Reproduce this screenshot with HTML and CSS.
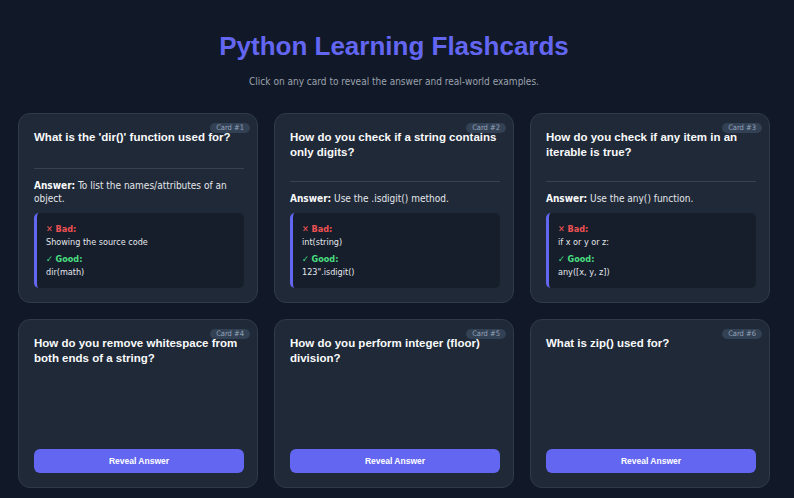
FILE: index.html
```html
<!DOCTYPE html>
<html lang="en">
<head>
<meta charset="utf-8">
<title>Python Learning Flashcards</title>
<link rel="stylesheet" href="styles.css">
</head>
<body>
<header class="header">
  <h1 class="title">Python Learning Flashcards</h1>
  <p class="subtitle">Click on any card to reveal the answer and real-world examples.</p>
</header>
<main class="grid">
  <section class="card">
    <span class="badge">Card #1</span>
    <h2 class="question">What is the 'dir()' function used for?</h2>
    <div class="answer">
      <p class="answer-text"><strong>Answer:</strong> To list the names/attributes of an object.</p>
      <div class="example">
        <div class="label bad">✕ Bad:</div>
        <div class="code">Showing the source code</div>
        <div class="label good">✓ Good:</div>
        <div class="code">dir(math)</div>
      </div>
    </div>
  </section>
  <section class="card">
    <span class="badge">Card #2</span>
    <h2 class="question">How do you check if a string contains only digits?</h2>
    <div class="answer">
      <p class="answer-text"><strong>Answer:</strong> Use the .isdigit() method.</p>
      <div class="example">
        <div class="label bad">✕ Bad:</div>
        <div class="code">int(string)</div>
        <div class="label good">✓ Good:</div>
        <div class="code">123".isdigit()</div>
      </div>
    </div>
  </section>
  <section class="card">
    <span class="badge">Card #3</span>
    <h2 class="question">How do you check if any item in an iterable is true?</h2>
    <div class="answer">
      <p class="answer-text"><strong>Answer:</strong> Use the any() function.</p>
      <div class="example">
        <div class="label bad">✕ Bad:</div>
        <div class="code">if x or y or z:</div>
        <div class="label good">✓ Good:</div>
        <div class="code">any([x, y, z])</div>
      </div>
    </div>
  </section>
  <section class="card card-closed">
    <span class="badge">Card #4</span>
    <h2 class="question">How do you remove whitespace from both ends of a string?</h2>
    <button class="reveal">Reveal Answer</button>
  </section>
  <section class="card card-closed">
    <span class="badge">Card #5</span>
    <h2 class="question">How do you perform integer (floor) division?</h2>
    <button class="reveal">Reveal Answer</button>
  </section>
  <section class="card card-closed">
    <span class="badge">Card #6</span>
    <h2 class="question">What is zip() used for?</h2>
    <button class="reveal">Reveal Answer</button>
  </section>
</main>
</body>
</html>
```
FILE: styles.css
```css
* { box-sizing: border-box; }
html, body { margin: 0; padding: 0; }
body {
  background: #111827;
  color: #e5e7eb;
  font-family: "DejaVu Sans Condensed", "DejaVu Sans", sans-serif;
  padding: 0 24px 0 18px;
}
.header {
  text-align: center;
  padding-top: 31px;
  height: 113px;
}
.title {
  margin: 0;
  font-family: "Liberation Sans", Arial, sans-serif;
  font-size: 26px;
  line-height: 30px;
  font-weight: bold;
  color: #6366f1;
}
.subtitle {
  margin: 14px 0 0;
  font-size: 10px;
  line-height: 14px;
  color: #9ca3af;
}
.grid {
  display: grid;
  grid-template-columns: repeat(3, 240px);
  gap: 16px;
}
.card {
  position: relative;
  background: #1f2937;
  border: 1px solid #2f3a4b;
  border-radius: 12px;
  padding: 16px 13px 14px 15px;
  display: flex;
  flex-direction: column;
  min-height: 169px;
}
.badge {
  position: absolute;
  top: 9px;
  right: 7px;
  background: #334155;
  color: #94a3b8;
  font-size: 7.5px;
  line-height: 10px;
  padding: 0 6px;
  border-radius: 6px;
}
.question {
  margin: 0 0 21px;
  font-family: "Liberation Sans", Arial, sans-serif;
  font-size: 11.5px;
  line-height: 15px;
  font-weight: bold;
  color: #f9fafb;
}
.answer {
  margin-top: auto;
  border-top: 1px solid #374151;
  padding-top: 10px;
}
.answer-text {
  margin: 0 0 8px;
  font-size: 10px;
  line-height: 13px;
  color: #e5e7eb;
}
.answer-text strong { color: #f9fafb; }
.example {
  background: #161e2c;
  border-left: 3px solid #6366f1;
  border-radius: 5px;
  padding: 10px 9px 9px;
  font-size: 9px;
  line-height: 13px;
}
.label { font-weight: bold; }
.bad { color: #f05252; }
.good { color: #4ade80; margin-top: 4px; }
.code { color: #e5e7eb; }
.reveal {
  margin-top: auto;
  height: 24px;
  width: 100%;
  border: 0;
  border-radius: 6px;
  background: #6366f1;
  color: #ffffff;
  font-family: "Liberation Sans", Arial, sans-serif;
  font-weight: bold;
  font-size: 8.5px;
}
```
